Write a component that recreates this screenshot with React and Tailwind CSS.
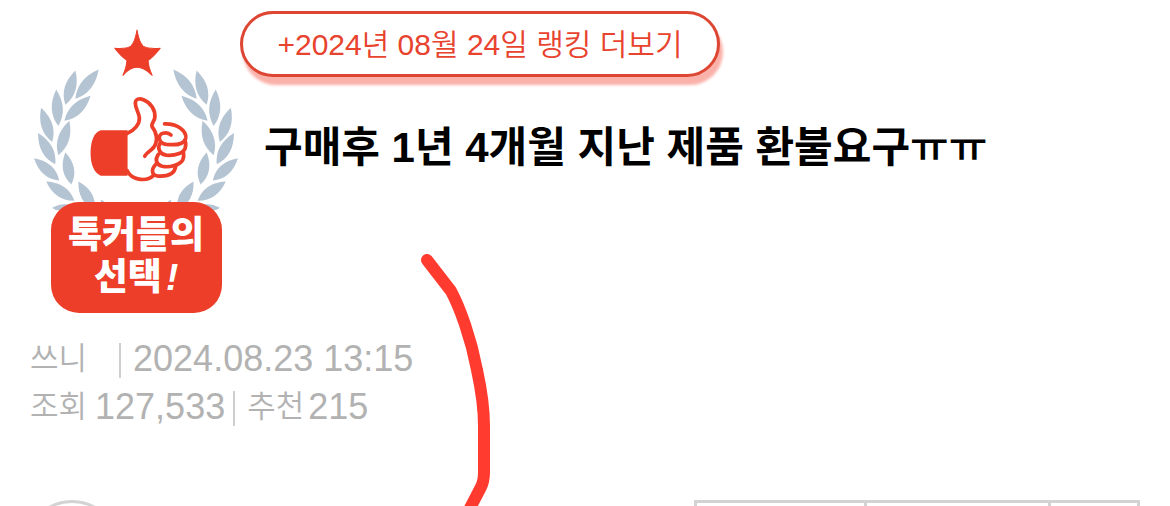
import React from 'react';

// [tipX, tipY, baseX, baseY] of each leaf on the left branch
const LEAVES = [
  [98, 69, 75, 98],
  [75, 70, 65, 104],
  [90, 95, 64, 120],
  [56, 89, 58, 125],
  [69, 120, 58, 154],
  [41, 107, 52, 141],
  [38, 132, 55, 163],
  [65, 151, 71, 183],
  [34, 157, 59, 179],
  [46, 180, 74, 199],
  [78, 180, 94, 208],
  [52, 206, 78, 208],
  [100, 198, 107, 208],
];

function leafPath([x1, y1, x2, y2]) {
  const length = Math.hypot(x2 - x1, y2 - y1);
  const bend = Math.min(length * 0.34, 11);
  const nx = (-(y2 - y1) / length) * bend;
  const ny = ((x2 - x1) / length) * bend;
  const mx = x1 + (x2 - x1) * 0.55;
  const my = y1 + (y2 - y1) * 0.55;
  return `M${x1} ${y1}Q${mx + nx} ${my + ny} ${x2} ${y2}Q${mx - nx} ${my - ny} ${x1} ${y1}Z`;
}

function Branch() {
  return LEAVES.map((leaf) => <path key={leaf.join()} d={leafPath(leaf)} />);
}

function Laurel() {
  return (
    <svg viewBox="30 28 210 180" className="block w-full" aria-hidden="true">
      <g fill="#b5c4d3">
        <Branch />
        <g transform="translate(270 0) scale(-1 1)">
          <Branch />
        </g>
      </g>
      <path
        d="M136 30Q138 42 142 46Q148 49 159 48Q152 57 147 60Q147 66 151 75Q143 67 136 67Q129 67 122 75Q126 66 126 60Q120 56 114 48Q125 49 130 46Q134 42 136 30Z"
        fill="#ec3e29"
        stroke="#ec3e29"
        strokeLinejoin="round"
      />
      <g transform="translate(85 90) scale(.3333)">
        <path d="M125 118H45C25 125 15 150 15 185C15 220 25 245 45 253H125Z" fill="#ec3e29" />
        <g fill="none" stroke="#ec3e29" strokeWidth="11" strokeLinecap="round" strokeLinejoin="round">
          <path d="M123 128C145 118 162 100 160 80C158 64 148 52 148 38C148 24 160 22 172 27C195 36 208 58 206 80C205 92 194 98 198 108C212 125 216 150 203 168C195 180 184 180 176 195" />
          <path d="M124 238C136 264 178 274 203 252" />
          <path d="M235 99C272 98 300 118 298 141C294 164 262 162 240 160C215 156 214 131 230 127C242 124 249 127 254 132" />
          <path d="M222 156C211 172 222 190 240 192C268 194 290 186 296 172C299 162 298 154 295 148" />
          <path d="M217 189C205 205 210 220 228 225C252 230 280 220 289 206C294 196 292 190 291 184" />
          <path d="M209 219C193 236 197 252 216 254C246 256 265 246 268 225" />
        </g>
      </g>
    </svg>
  );
}

function ChoiceBadge() {
  return (
    <div className="w-[212px] shrink-0 pt-[28px]">
      <Laurel />
      <div className="relative mx-auto -mt-[8px] flex h-[111px] w-[171px] flex-col items-center justify-center rounded-[28px] bg-[#ec3e29] text-[37px] leading-[42px] font-black text-white">
        <span>톡커들의</span>
        <span>
          선택<i className="pl-1">!</i>
        </span>
      </div>
    </div>
  );
}

function Divider() {
  return <span className="mt-[3px] h-[35px] w-[2px] bg-[#cfcfcf]" />;
}

export default function App() {
  return (
    <main className="relative h-screen overflow-hidden bg-white font-['Liberation_Sans','Noto_Sans_CJK_KR',sans-serif]">
      <header className="flex px-[30px]">
        <ChoiceBadge />
        <div className="-ml-[2px] min-w-0 flex-1 pt-[11px]">
          <a
            href="#ranking"
            className="flex h-[66px] w-[480px] items-center justify-center rounded-full border-3 border-[#dc4632] bg-white text-[30px] font-[350] whitespace-nowrap text-[#e8432e] shadow-[3px_8px_3px_#fab1a9]"
          >
            +2024년 08월 24일 랭킹 더보기
          </a>
          <h1 className="mt-[41px] pl-6 text-[42px] leading-[60px] font-bold text-black">
            구매후 1년 4개월 지난 제품 환불요구<span className="font-medium">ㅠㅠ</span>
          </h1>
        </div>
      </header>

      <div className="mt-[22px] px-[30px] text-[36px] leading-[48px] text-[#b2b2b2]">
        <div className="flex items-center">
          <span className="text-[31px] font-[350]">쓰니</span>
          <span className="w-8" />
          <Divider />
          <time className="ml-3">2024.08.23 13:15</time>
        </div>
        <div className="flex items-center">
          <span className="text-[31px] font-[350]">조회</span>
          <span className="mx-2">127,533</span>
          <Divider />
          <span className="ml-3 text-[31px] font-[350]">추천</span>
          <span className="ml-1">215</span>
        </div>
      </div>

      <div className="mt-[69px] flex items-start justify-between pr-[30px] pl-6">
        <button type="button" aria-label="프로필" className="size-24 rounded-full border-3 border-[#d3d3d3]" />
        <div className="flex h-16 w-[446px] divide-x-3 divide-[#d3d3d3] border-3 border-[#d3d3d3]">
          <button type="button" aria-label="댓글" className="w-[170px]" />
          <button type="button" aria-label="공유" className="flex-1" />
          <button type="button" aria-label="더보기" className="w-[86px]" />
        </div>
      </div>

      {/* pen mark drawn over the post */}
      <svg
        viewBox="0 0 80 260"
        className="pointer-events-none absolute top-[250px] left-[415px] w-20"
        fill="none"
        stroke="#ff3b30"
        strokeWidth="12"
        strokeLinecap="round"
        strokeLinejoin="round"
        aria-hidden="true"
      >
        <path d="M12 10L36 41C45 58 56 88 62 120Q69 152 69 176V222Q69 231 66 237L53 262" />
      </svg>
    </main>
  );
}
